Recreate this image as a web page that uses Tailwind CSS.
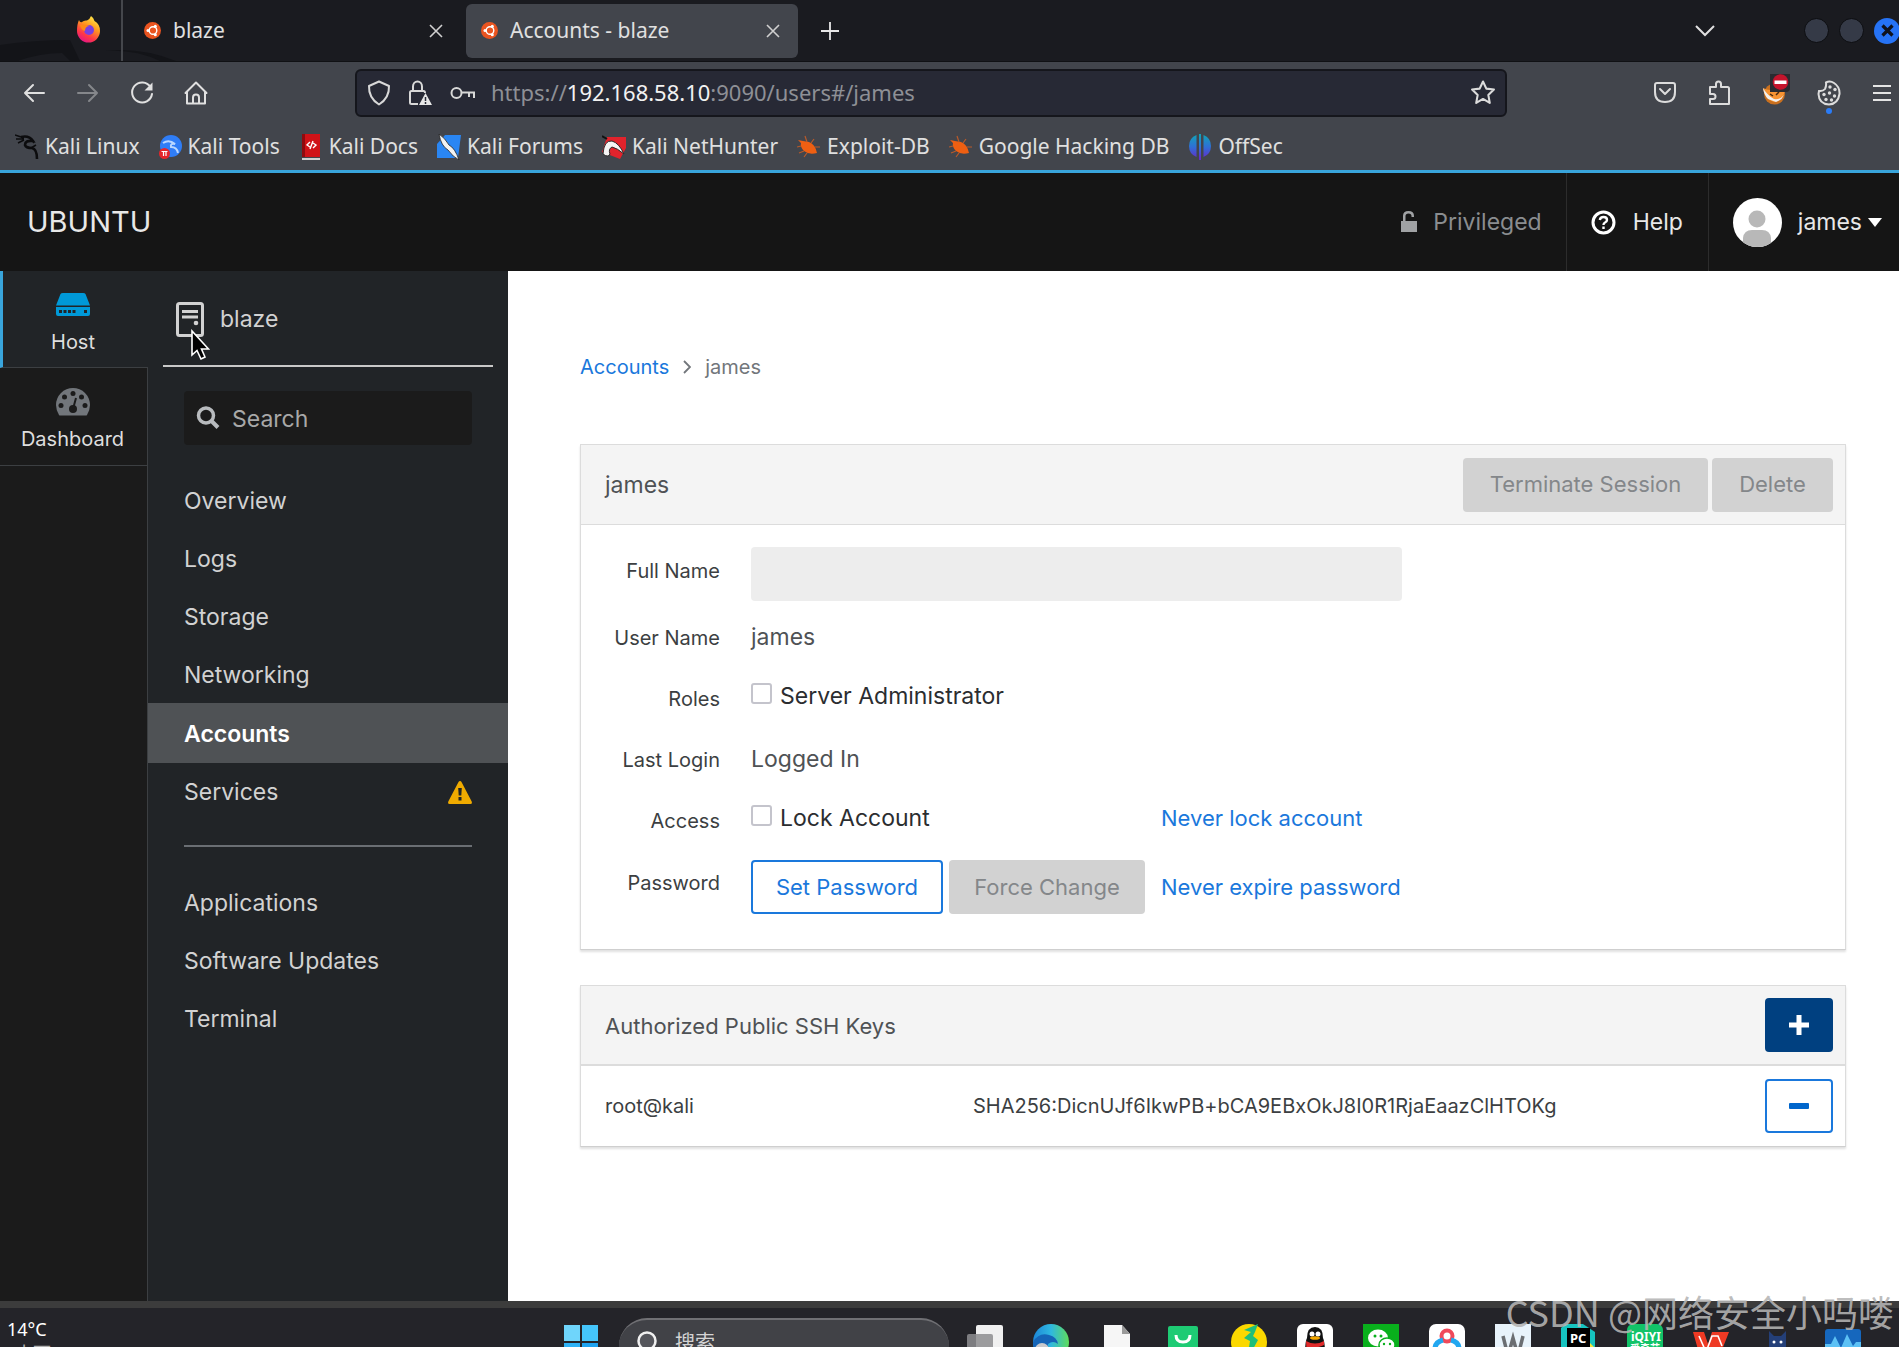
<!DOCTYPE html>
<html lang="en">
<head>
   <meta charset="UTF-8">
   <meta name="viewport" content="width=device-width, initial-scale=1.0">
   <title>Accounts - blaze</title>
   <script src="https://cdn.jsdelivr.net/npm/@tailwindcss/browser@4"></script>
   <style>
       body {
           font-family: 'Inter', 'Noto Sans CJK SC', sans-serif;
       }
       .chrome {
           font-family: 'Noto Sans', 'Noto Sans CJK SC', sans-serif;
       }
   </style>
</head>
<body class="h-screen flex flex-col overflow-hidden bg-[#151515] text-[23px]">

   <!-- Browser window -->
   <div class="chrome shrink-0 text-[21px] text-[#e0e0e0]">
       <!-- Tab strip -->
       <div class="h-[62px] bg-[#1a1b20] border-b border-[#101114] flex items-center relative">
           <svg class="absolute left-0 bottom-0 w-[180px] h-[22px]" viewBox="0 0 180 22">
               <path d="M0 6Q34 1 70 1L80 22H70L62 14Q40 14 18 22H0Z" fill="#131418"/>
               <path d="M106 12Q140 8 176 22H160Q135 10 106 12Z" fill="#131418"/>
           </svg>
           <div class="w-[123px] h-full shrink-0 border-r-2 border-[#45474c] flex items-center justify-end pr-[20px] relative">
               <svg class="w-[25px] h-[29px]" viewBox="0 0 25 29">
                   <defs>
                       <linearGradient id="ff" x1="0.8" y1="0" x2="0.3" y2="1"><stop offset="0" stop-color="#fff44f"/><stop offset=".4" stop-color="#ff9a1f"/><stop offset=".75" stop-color="#ff3647"/><stop offset="1" stop-color="#e31587"/></linearGradient>
                   </defs>
                   <path d="M15 0Q18 2 18.500 5Q24 8 24 15A11.500 11.500 0 0 1 1 15Q1 8 3 4Q4 7 6 6Q8 4 11 4.500Q14 3 15 0Z" fill="url(#ff)"/>
                   <circle cx="13" cy="14" r="5" fill="#7a3fe0"/>
                   <path d="M4 9Q9 8 14 10Q9 10 9 15Q5 14 4 9Z" fill="#ff8a16"/>
               </svg>
           </div>
           <button class="h-full w-[343px] shrink-0 flex items-center pl-[21px] pr-[22px] gap-[12px] relative">
               <svg class="w-[17px] h-[17px]" viewBox="0 0 17 17"><circle cx="8.500" cy="8.500" r="8.500" fill="#e95420"/><circle cx="9" cy="8.500" r="3.800" fill="none" stroke="#fff" stroke-width="1.400"/><circle cx="4" cy="8.500" r="1.500" fill="#fff"/><circle cx="11.300" cy="4.300" r="1.500" fill="#fff"/><circle cx="11.300" cy="12.700" r="1.500" fill="#fff"/></svg>
               <span>blaze</span>
               <svg class="ml-auto w-[16px] h-[16px]" viewBox="0 0 16 16" stroke="#d0d0d0" stroke-width="1.600"><path d="M2 2L14 14M14 2L2 14"/></svg>
           </button>
           <button class="h-[54px] w-[332px] shrink-0 rounded-md bg-[#42454c] flex items-center pl-[15px] pr-[17px] gap-[12px]">
               <svg class="w-[17px] h-[17px]" viewBox="0 0 17 17"><circle cx="8.500" cy="8.500" r="8.500" fill="#e95420"/><circle cx="9" cy="8.500" r="3.800" fill="none" stroke="#fff" stroke-width="1.400"/><circle cx="4" cy="8.500" r="1.500" fill="#fff"/><circle cx="11.300" cy="4.300" r="1.500" fill="#fff"/><circle cx="11.300" cy="12.700" r="1.500" fill="#fff"/></svg>
               <span>Accounts - blaze</span>
               <svg class="ml-auto w-[16px] h-[16px]" viewBox="0 0 16 16" stroke="#d0d0d0" stroke-width="1.600"><path d="M2 2L14 14M14 2L2 14"/></svg>
           </button>
           <button class="ml-[22px]" aria-label="New tab">
               <svg class="w-[20px] h-[20px]" viewBox="0 0 20 20" stroke="#e8e8e8" stroke-width="1.800"><path d="M10 1V19M1 10H19"/></svg>
           </button>
           <div class="ml-auto flex items-center">
               <button class="mr-[89px]" aria-label="List all tabs">
                   <svg class="w-[20px] h-[14px]" viewBox="0 0 20 14" fill="none" stroke="#e0e0e0" stroke-width="2"><path d="M1 2L10 11L19 2"/></svg>
               </button>
               <div class="flex gap-[10px] -mr-[1px]">
                   <button class="w-[25px] h-[25px] rounded-full bg-[#353a47] border border-[#0c0d10]" aria-label="Minimize"></button>
                   <button class="w-[25px] h-[25px] rounded-full bg-[#353a47] border border-[#0c0d10]" aria-label="Maximize"></button>
                   <button class="w-[26px] h-[26px] rounded-full bg-[#2673f5] flex items-center justify-center" aria-label="Close">
                       <svg class="w-[13px] h-[13px]" viewBox="0 0 13 13" stroke="#10131c" stroke-width="3.200"><path d="M1.500 1.500L11.500 11.500M11.500 1.500L1.500 11.500"/></svg>
                   </button>
               </div>
           </div>
       </div>

       <!-- Navigation toolbar -->
       <div class="h-[61px] bg-[#42454c] flex items-center pl-[22px] pr-[7px]">
           <div class="flex gap-[30px] w-[333px] shrink-0">
               <button aria-label="Back"><svg class="w-[24px] h-[24px]" viewBox="0 0 24 24" fill="none" stroke="#e0e0e0" stroke-width="2" stroke-linecap="round" stroke-linejoin="round"><path d="M22 12H3M11 4L3 12L11 20"/></svg></button>
               <button aria-label="Forward"><svg class="w-[24px] h-[24px]" viewBox="0 0 24 24" fill="none" stroke="#85878b" stroke-width="2" stroke-linecap="round" stroke-linejoin="round"><path d="M2 12H21M13 4L21 12L13 20"/></svg></button>
               <button aria-label="Reload"><svg class="w-[24px] h-[24px]" viewBox="0 0 24 24" fill="none" stroke="#e0e0e0" stroke-width="2" stroke-linecap="round"><path d="M20.500 6A10 10 0 1 0 22 13"/><path d="M22.500 1.500V9.500H14.500Z" fill="#e0e0e0" stroke="none"/></svg></button>
               <button aria-label="Home"><svg class="w-[24px] h-[24px]" viewBox="0 0 24 24" fill="none" stroke="#e0e0e0" stroke-width="2" stroke-linejoin="round" stroke-linecap="round"><path d="M1.500 12L12 1.500L22.500 12M3 11V22.500H21V11M9 22V16.500Q9 13.500 12 13.500Q15 13.500 15 16.500V22"/></svg></button>
           </div>
           <div class="h-[48px] flex-1 max-w-[1152px] rounded-md bg-[#272935] border-2 border-[#15161c] flex items-center pl-[10px] pr-[9px]">
               <svg class="w-[24px] h-[26px]" viewBox="0 0 24 26" fill="none" stroke="#d8d8d8" stroke-width="2" stroke-linejoin="round"><path d="M12 1.500L22 6Q22.500 18 12 24.500Q1.500 18 2 6Z"/></svg>
               <svg class="ml-[17px] w-[24px] h-[26px]" viewBox="0 0 24 26" fill="none" stroke="#d8d8d8" stroke-width="2"><path d="M10 24H3.500Q2 24 2 22.500V12.500Q2 11 3.500 11H15.500Q17 11 17 13M5 11V6.500A4.500 5 0 0 1 14 6.500V11"/><path d="M17.500 13L24 25H11Z" fill="#e8e8e8" stroke="none"/><path d="M17.500 17V21M17.500 22V24" stroke="#272935" stroke-width="1.500"/></svg>
               <svg class="ml-[18px] w-[26px] h-[16px]" viewBox="0 0 26 16" fill="none" stroke="#d8d8d8" stroke-width="2"><circle cx="6.500" cy="8" r="5"/><path d="M11.500 7.500H25M24 7.500V13M19 7.500V12"/></svg>
               <div class="ml-[15px] text-[22px] text-[#8e9096]">https://<span class="text-[#f2f2f2]">192.168.58.10</span>:9090/users#/james</div>
               <svg class="ml-auto w-[26px] h-[25px]" viewBox="0 0 24 24" fill="none" stroke="#dcdcdc" stroke-width="2" stroke-linejoin="round"><path d="M12 1.500L15.200 8.300L22.500 9.200L17.100 14.300L18.500 22L12 18.200L5.500 22L6.900 14.300L1.500 9.200L8.800 8.300Z"/></svg>
           </div>
           <div class="ml-auto flex items-center gap-[31px]">
               <svg class="w-[22px] h-[24px]" viewBox="0 0 22 24" fill="none" stroke="#dcdcdc" stroke-width="2" stroke-linejoin="round" stroke-linecap="round"><path d="M3 2H19Q21 2 21 4V11Q21 21 11 21Q1 21 1 11V4Q1 2 3 2Z"/><path d="M6 8L11 13L16 8"/></svg>
               <svg class="w-[24px] h-[26px]" viewBox="0 0 24 26" fill="none" stroke="#dcdcdc" stroke-width="2" stroke-linejoin="round"><path d="M3 7H9V4Q9 1.500 11.500 1.500Q14 1.500 14 4V7H20.500Q22 7 22 8.500V24H3V19H6Q8.500 19 8.500 16.500Q8.500 14 6 14H3Z"/></svg>
               <span class="relative">
                   <svg class="w-[24px] h-[26px]" viewBox="0 0 24 26"><circle cx="12.500" cy="14" r="10.500" fill="#c9701f"/><path d="M1 8Q5 10 8 10L17 9L23 7Q24 18 12 22Q2 19 1 8Z" fill="#f79433"/><path d="M1 8Q2 15 6 19L14 22Q20 20 22 15Q18 20 12 19Q5 15 1 8Z" fill="#f2f0ee"/><path d="M8 14L11 16M17 12L14 15" stroke="#4b2a10" stroke-width="1.500"/></svg>
                   <svg class="absolute -top-[7px] left-[8px] w-[20px] h-[19px]" viewBox="0 0 20 19"><path d="M0 1H20V15Q20 19 16 19H0Z" fill="#2a2b30"/><circle cx="10.500" cy="9" r="7.800" fill="#c4142c"/><path d="M4.500 7.500H16.500V11H4.500Z" fill="#fff"/></svg>
               </span>
               <span class="relative">
                   <svg class="w-[24px] h-[26px]" viewBox="0 0 24 26" fill="none" stroke="#dcdcdc" stroke-width="2"><path d="M9 2.500Q13 .5 17 3Q23 7 22.500 14Q21 24 12 24.500Q2 24 1.500 14L2 11Q6 11.500 8 9Q9.500 6 9 2.500Z"/><g fill="#dcdcdc" stroke="none"><circle cx="13" cy="7" r="1.700"/><circle cx="18" cy="9.500" r="1.700"/><circle cx="12.500" cy="13" r="1.700"/><circle cx="7" cy="14.500" r="1.700"/><circle cx="17.500" cy="16" r="1.700"/><circle cx="9" cy="19.500" r="1.700"/><circle cx="14.500" cy="20" r="1.700"/></g></svg>
                   <span class="absolute left-[9px] -bottom-[8px] w-[6px] h-[6px] rounded-full bg-[#2b7cf6]"></span>
               </span>
               <svg class="w-[20px] h-[18px]" viewBox="0 0 20 18" stroke="#e4e4e4" stroke-width="2"><path d="M1 2H19M1 9H19M1 16H19"/></svg>
           </div>
       </div>

       <!-- Bookmarks -->
       <nav class="h-[47px] bg-[#42454c] flex items-center pl-[15px] gap-[19px] whitespace-nowrap">
           <a href="#" class="flex items-center gap-[6px]">
               <svg class="w-[24px] h-[26px]" viewBox="0 0 24 26" fill="none" stroke="#0c0c0e"><path d="M0 1L9 4M1 5L9 5M3 9L9 6" stroke-width="1.500"/><path d="M6 3Q14 1 18 7Q10 6 10 11Q11 14 17 14Q22 15 22 25" stroke-width="2.600"/><path d="M16 5L19 9M16 14L21 11" stroke-width="1.500"/></svg>
               Kali Linux</a>
           <a href="#" class="flex items-center gap-[6px]">
               <svg class="w-[23px] h-[26px]" viewBox="0 0 23 26"><circle cx="12" cy="12" r="11" fill="#2f7df6"/><path d="M4 9Q10 5 16 10Q11 9 12 13Q18 13 19 19" fill="none" stroke="#b9d7ff" stroke-width="2"/><circle cx="5.500" cy="19.500" r="5.500" fill="#e5252a"/><path d="M2.500 17.500H8.500M4.500 17.500V22M7 17.500V22" stroke="#fff" stroke-width="1.200"/></svg>
               Kali Tools</a>
           <a href="#" class="flex items-center gap-[6px]">
               <svg class="w-[24px] h-[26px]" viewBox="0 0 24 26"><path d="M3 0H21V23H3Z" fill="#d01217"/><path d="M3 0H6V23H3Z" fill="#8f0a0e"/><path d="M3 24H21V26H3Z" fill="#cfcfcf"/><path d="M11 8L8 11L11 13M14 9L17 11L14 14M14 7L11 15" stroke="#fff" stroke-width="1.400" fill="none"/></svg>
               Kali Docs</a>
           <a href="#" class="flex items-center gap-[6px]">
               <svg class="w-[24px] h-[26px]" viewBox="0 0 24 26"><path d="M8 1H24L21 24H0V10Z" fill="#2a86f3"/><path d="M2 0Q8 4 12 11Q18 14 22 26Q16 23 11 16Q4 12 2 0Z" fill="#f2f2f2" stroke="#222" stroke-width=".8"/></svg>
               Kali Forums</a>
           <a href="#" class="flex items-center gap-[6px]">
               <svg class="w-[24px] h-[26px]" viewBox="0 0 24 26"><path d="M5 3H24V14L18 25L0 18Z" fill="#e2232c"/><path d="M1 20Q2 6 10 7Q17 9 22 20Q15 14 10 13Q6 15 8 20Q6 24 1 20Z" fill="#f5f5f5" stroke="#2a2a2a" stroke-width="1"/><path d="M0 2L5 5" stroke="#111" stroke-width="2"/></svg>
               Kali NetHunter</a>
           <a href="#" class="flex items-center gap-[6px]">
               <svg class="w-[24px] h-[26px]" viewBox="0 0 24 26"><path d="M1 6L6 7L12 8Q18 10 20 19Q12 21 7 17Q3 13 4 9Z" fill="#ee5f12"/><path d="M10 8L8 2M14 9L17 5M18 13L23 13M7 17L2 19M10 19L7 23M4 12L0 13" stroke="#b85a2a" stroke-width="1.200"/></svg>
               Exploit-DB</a>
           <a href="#" class="flex items-center gap-[6px]">
               <svg class="w-[24px] h-[26px]" viewBox="0 0 24 26"><path d="M1 6L6 7L12 8Q18 10 20 19Q12 21 7 17Q3 13 4 9Z" fill="#ee5f12"/><path d="M10 8L8 2M14 9L17 5M18 13L23 13M7 17L2 19M10 19L7 23M4 12L0 13" stroke="#b85a2a" stroke-width="1.200"/></svg>
               Google Hacking DB</a>
           <a href="#" class="flex items-center gap-[6px]">
               <svg class="w-[24px] h-[26px]" viewBox="0 0 24 26"><defs><linearGradient id="os" x1="0" y1="0" x2="0" y2="1"><stop offset="0" stop-color="#10a5b5"/><stop offset=".5" stop-color="#2f6fd6"/><stop offset="1" stop-color="#6a24c8"/></linearGradient></defs><path d="M8.500 1V23Q1 20 1 12Q1 4 8.500 1ZM15.500 1V23Q23 20 23 12Q23 4 15.500 1ZM11 0H13V26H11Z" fill="url(#os)"/></svg>
               OffSec</a>
       </nav>
   </div>

   <!-- Cockpit masthead -->
   <header class="shrink-0 h-[101px] bg-[#151515] border-t-[3px] border-[#39a5dc] flex items-center pl-[27px] text-[#e8e8e8]">
       <div class="text-[29px]">UBUNTU</div>
       <div class="ml-auto flex h-full items-center">
           <div class="flex items-center gap-[15px] pr-[24px] text-[#8a8d90]">
               <svg class="w-[18px] h-[24px]" viewBox="0 0 18 24"><path d="M1 11H3V6Q3 1 8.500 1Q14 1 14 6V7H11.500V6Q11.500 3.500 8.500 3.500Q5.500 3.500 5.500 6V11H17V22H1Z" fill="#a0a2a4"/></svg>
               Privileged
           </div>
           <a href="#" class="h-full border-l border-[#2c2c2c] flex items-center gap-[17px] pl-[24px] pr-[25px]">
               <svg class="w-[25px] h-[25px]" viewBox="0 0 25 25" fill="none" stroke="#fff" stroke-width="3"><circle cx="12.500" cy="12.500" r="10.500"/><path d="M8.800 10Q9.300 7 12.500 7Q16 7 16 10Q16 11.500 14 12.500Q12.500 13.200 12.500 15M12.500 16.500V19" stroke-width="2.400"/></svg>
               Help
           </a>
           <button class="h-full border-l border-[#2c2c2c] flex items-center pl-[24px] pr-[17px]">
               <svg class="w-[49px] h-[49px]" viewBox="0 0 49 49"><defs><clipPath id="av"><circle cx="24.500" cy="24.500" r="24.500"/></clipPath></defs><g clip-path="url(#av)"><path d="M0 0H49V49H0Z" fill="#fff"/><circle cx="24" cy="21" r="8.500" fill="#b8b8b8"/><path d="M10 49V40Q11 32 19 32H29Q37 32 38 40V49Z" fill="#b8b8b8"/></g></svg>
               <span class="ml-[16px]">james</span>
               <svg class="ml-[6px] w-[14px] h-[9px]" viewBox="0 0 14 9"><path d="M0 0H14L7 9Z" fill="#fff"/></svg>
           </button>
       </div>
   </header>

   <main class="flex-1 min-h-0 flex">
       <!-- Host switcher -->
       <nav class="w-[148px] shrink-0 bg-[#1b1b1b] text-[#dedede] text-[20px] border-r border-[#3c3f42]">
           <a href="#" class="h-[97px] -mr-[1px] bg-[#212427] border-l-[3px] border-l-[#39a5dc] border-b border-b-[#3c3f42] flex flex-col items-center pt-[22px] pr-[5px] relative">
               <svg class="w-[34px] h-[23px]" viewBox="0 0 34 23"><path d="M7 0H27Q29 0 29.500 1L34 12.500H0L4.500 1Q5 0 7 0ZM0 14H34V21Q34 23 32 23H2Q0 23 0 21Z" fill="#0099d8"/><path d="M3 17H6V20H3ZM7.500 17H10.500V20H7.500ZM12 17H15V20H12ZM16.500 17H19.500V20H16.500ZM28 17H31V20H28Z" fill="#212427"/></svg>
               <span class="mt-[12px] leading-[28px]">Host</span>
           </a>
           <a href="#" class="h-[98px] border-b border-[#3c3f42] flex flex-col items-center pt-[20px] pr-[2px]">
               <svg class="w-[34px] h-[28px]" viewBox="0 0 34 28"><path d="M3 27Q0 22 0 17A17 17 0 0 1 34 17Q34 22 31 27Q30.500 27.500 30 27.500H4Q3.500 27.500 3 27Z" fill="#72767b"/><g fill="#1b1b1b"><circle cx="17" cy="5.500" r="2.500"/><circle cx="8.500" cy="9" r="2.500"/><circle cx="25.500" cy="9" r="2.500"/><circle cx="5" cy="17.500" r="2.500"/><circle cx="29" cy="17.500" r="2.500"/><circle cx="17" cy="21" r="4"/></g><path d="M17 21L20 10" stroke="#1b1b1b" stroke-width="2"/></svg>
               <span class="mt-[9px] leading-[28px]">Dashboard</span>
           </a>
       </nav>

       <!-- Sidebar -->
       <aside class="w-[360px] shrink-0 bg-[#212427] text-[#d2d2d2] flex flex-col">
           <div class="h-[96px] mx-[15px] border-b-2 border-[#c8c8c8] flex items-center pl-[13px] pt-[3px] relative">
               <svg class="w-[28px] h-[36px]" viewBox="0 0 28 36" fill="none" stroke="#d2d2d2" stroke-width="3"><rect x="1.500" y="1.500" width="25" height="32" rx="2"/><path d="M6 9.500H22M6 15H22" stroke-width="2.800"/><circle cx="20" cy="21" r="2.300" fill="#d2d2d2" stroke="none"/></svg>
               <span class="ml-[16px]">blaze</span>
               <!-- mouse pointer -->
               <svg class="absolute left-[27px] top-[58px] w-[20px] h-[32px]" viewBox="0 0 20 32"><path d="M2 2V26L7 21.500L11 30L15 28L11.500 20H18.500Z" fill="#000" stroke="#fff" stroke-width="1.600"/></svg>
           </div>
           <label class="mt-[24px] mx-[36px] h-[54px] rounded bg-[#1b1b1b] flex items-center pl-[12px]">
               <svg class="w-[24px] h-[24px] shrink-0" viewBox="0 0 24 24" fill="none" stroke="#b8bbbe" stroke-width="3.500"><circle cx="10" cy="9.500" r="7.500"/><path d="M15.500 15L22 21.500" stroke-width="4"/></svg>
               <input type="text" placeholder="Search" aria-label="Search" class="ml-[12px] pt-[2px] w-full bg-transparent outline-none placeholder:text-[#a8a8a8]">
           </label>
           <nav class="mt-[26px]">
               <a href="#" class="h-[58px] px-[36px] pt-[2px] flex items-center">Overview</a>
               <a href="#" class="h-[58px] px-[36px] pt-[2px] flex items-center">Logs</a>
               <a href="#" class="h-[58px] px-[36px] pt-[2px] flex items-center">Storage</a>
               <a href="#" class="h-[58px] px-[36px] pt-[2px] flex items-center">Networking</a>
               <a href="#" class="h-[60px] px-[36px] pt-[2px] flex items-center bg-[#4f5255] text-white font-semibold">Accounts</a>
               <a href="#" class="h-[58px] px-[36px] flex items-center justify-between">Services
                   <svg class="w-[24px] h-[23px]" viewBox="0 0 24 23"><path d="M12 0Q13 0 13.500 1L23.700 20.500Q24.500 23 22.500 23H1.500Q-.5 23 .3 20.500L10.500 1Q11 0 12 0Z" fill="#f0ab00"/><path d="M10.200 7H13.800L13.300 14.500H10.700ZM10.500 16H13.500V19.500H10.500Z" fill="#212427"/></svg>
               </a>
               <hr class="mx-[36px] mt-[24px] mb-[26px] border-t-2 border-[#6a6e73]">
               <a href="#" class="h-[58px] px-[36px] pt-[2px] flex items-center">Applications</a>
               <a href="#" class="h-[58px] px-[36px] pt-[2px] flex items-center">Software Updates</a>
               <a href="#" class="h-[58px] px-[36px] pt-[2px] flex items-center">Terminal</a>
           </nav>
       </aside>

       <!-- Account page -->
       <section class="flex-1 bg-white pl-[72px] pr-[53px] pt-[82px] text-[#3c3f42]">
           <nav class="h-[28px] flex items-center text-[20px] text-[#72767b]">
               <a href="#" class="text-[#1a78dc]">Accounts</a>
               <svg class="mx-[14px] w-[8px] h-[14px]" viewBox="0 0 8 14" fill="none" stroke="#72767b" stroke-width="1.800"><path d="M1 1L7 7L1 13"/></svg>
               <span>james</span>
           </nav>

           <form class="mt-[63px] border border-[#dcdcdc] border-b-[#cfcfcf] shadow-[0_2px_2px_#0000001f]">
               <div class="h-[80px] bg-[#f4f4f4] border-b border-[#dcdcdc] flex items-center pl-[24px] pr-[12px]">
                   <h2 class="pt-[2px] text-[#4f5255]">james</h2>
                   <button type="button" disabled class="ml-auto h-[54px] w-[245px] rounded bg-[#d2d2d2] text-[22px] text-[#84878a]">Terminate Session</button>
                   <button type="button" disabled class="ml-[4px] h-[54px] w-[121px] rounded bg-[#d2d2d2] text-[22px] text-[#84878a]">Delete</button>
               </div>
               <div class="pt-[22px] pb-[35px]">
                   <div class="flex items-center">
                       <label for="fullName" class="w-[139px] shrink-0 mr-[31px] pb-[6px] text-right text-[20px]">Full Name</label>
                       <input id="fullName" type="text" disabled class="h-[54px] w-full max-w-[651px] rounded bg-[#ededed]">
                   </div>
                   <div class="mt-[6px] h-[61px] flex items-center">
                       <span class="w-[139px] shrink-0 mr-[31px] text-right text-[20px]">User Name</span>
                       <span class="text-[#4f5255]">james</span>
                   </div>
                   <div class="h-[61px] flex items-center">
                       <span class="w-[139px] shrink-0 mr-[31px] text-right text-[20px]">Roles</span>
                       <label class="flex items-center gap-[8px] pb-[5px] text-[#2b2d30]"><input type="checkbox" class="appearance-none w-[21px] h-[21px] mb-[6px] rounded-[3px] border-2 border-[#c4c4cc] bg-white">Server Administrator</label>
                   </div>
                   <div class="h-[61px] flex items-center">
                       <span class="w-[139px] shrink-0 mr-[31px] text-right text-[20px]">Last Login</span>
                       <span class="text-[#4f5255]">Logged In</span>
                   </div>
                   <div class="h-[61px] flex items-center">
                       <span class="w-[139px] shrink-0 mr-[31px] text-right text-[20px]">Access</span>
                       <label class="w-[394px] shrink-0 mr-[16px] flex items-center gap-[8px] pb-[5px] text-[#2b2d30]"><input type="checkbox" class="appearance-none w-[21px] h-[21px] mb-[6px] rounded-[3px] border-2 border-[#c4c4cc] bg-white">Lock Account</label>
                       <a href="#" class="pb-[5px] text-[22px] text-[#1a78dc]">Never lock account</a>
                   </div>
                   <div class="mt-[9px] flex items-center">
                       <span class="w-[139px] shrink-0 mr-[31px] pb-[8px] text-right text-[20px]">Password</span>
                       <div class="w-[394px] shrink-0 mr-[16px] flex gap-[6px] text-[22px]">
                           <button type="button" class="h-[54px] w-[192px] rounded border-2 border-[#1a78dc] text-[#1a78dc]">Set Password</button>
                           <button type="button" disabled class="h-[54px] w-[196px] rounded bg-[#d2d2d2] text-[#84878a]">Force Change</button>
                       </div>
                       <a href="#" class="text-[22px] text-[#1a78dc]">Never expire password</a>
                   </div>
               </div>
           </form>

           <div class="mt-[35px] border border-[#dcdcdc] border-b-[#cfcfcf] shadow-[0_2px_2px_#0000001f]">
               <div class="h-[80px] bg-[#f4f4f4] border-b-2 border-[#dcdcdc] flex items-center pl-[24px] pr-[12px]">
                   <h2 class="pt-[2px] text-[22px] text-[#4f5255]">Authorized Public SSH Keys</h2>
                   <button class="ml-auto w-[68px] h-[54px] rounded bg-[#004080] flex items-center justify-center" aria-label="Add key">
                       <svg class="w-[20px] h-[20px]" viewBox="0 0 20 20"><path d="M7.500 0H12.500V7.500H20V12.500H12.500V20H7.500V12.500H0V7.500H7.500Z" fill="#fff"/></svg>
                   </button>
               </div>
               <table class="w-full text-[20px]">
                   <tr class="h-[80px]">
                       <td class="w-[392px] pl-[24px]">root@kali</td>
                       <td>SHA256:DicnUJf6IkwPB+bCA9EBxOkJ8I0R1RjaEaazClHTOKg</td>
                       <td class="w-[80px] pr-[12px]">
                           <button class="w-[68px] h-[54px] rounded border-2 border-[#1a78dc] flex items-center justify-center" aria-label="Remove key">
                               <svg class="w-[20px] h-[6px]" viewBox="0 0 20 6"><rect width="20" height="6" rx="1" fill="#0066cc"/></svg>
                           </button>
                       </td>
                   </tr>
               </table>
           </div>
       </section>
   </main>

   <!-- Desktop taskbar -->
   <footer class="chrome shrink-0 h-[46px] bg-[#242429] border-t-[7px] border-[#3c3c3c] flex items-start overflow-hidden relative text-white">
       <div class="w-[564px] shrink-0 pl-[7px] pt-[9px] text-[18px] leading-[24px]">14°C<div class="pl-[8px] text-[#b0b0b0]">小雨</div></div>
       <div class="w-[34px] h-[34px] mt-[17px] shrink-0 grid grid-cols-2 gap-[2px]">
           <span class="bg-[#6fd5fb]"></span><span class="bg-[#45c6fb]"></span><span class="bg-[#2fb2f6]"></span><span class="bg-[#1da2f0]"></span>
       </div>
       <div class="ml-[21px] mt-[10px] w-[330px] h-[56px] shrink-0 rounded-full bg-[#414247] border-t-2 border-[#707074] flex items-start pl-[17px] pt-[10px]">
           <svg class="w-[22px] h-[26px]" viewBox="0 0 22 26" fill="#55565c" stroke="#f0f0f0" stroke-width="2.500"><circle cx="11" cy="11" r="8.500"/><path d="M5 17L1 23"/></svg>
           <span class="ml-[17px] text-[20px] leading-[26px] text-[#d4d4d4]">搜索</span>
       </div>
       <div class="ml-[18px] mt-[16px] flex gap-[30px]">
           <svg class="w-[36px] h-[36px]" viewBox="0 0 36 36"><rect x="9" y="1" width="27" height="30" rx="2" fill="#f0f0f0"/><rect x="0" y="10" width="26" height="26" rx="2" fill="#8d8d8f" opacity=".85"/></svg>
           <svg class="w-[36px] h-[36px]" viewBox="0 0 36 36"><defs><linearGradient id="eg" x1="0" y1="0" x2="1" y2="0"><stop offset="0" stop-color="#1c86d8"/><stop offset=".5" stop-color="#2fb8e0"/><stop offset="1" stop-color="#5fdc5a"/></linearGradient></defs><circle cx="18" cy="18" r="18" fill="url(#eg)"/><path d="M0 18Q6 8 16 11Q24 13 25 20Q20 16 15 20L13 36Q0 32 0 18Z" fill="#1565b8"/><circle cx="9" cy="26" r="7" fill="#c9c9cc"/></svg>
           <svg class="w-[36px] h-[36px]" viewBox="0 0 36 36"><path d="M5 1H23L31 10V36H5Z" fill="#f6f6f6"/><path d="M23 1V10H31Z" fill="#9a9a9a"/></svg>
           <svg class="w-[36px] h-[36px]" viewBox="0 0 36 36"><path d="M5 2H31Q33 2 33 4V36H3V4Q3 2 5 2Z" fill="#1ecb74"/><path d="M11 11Q11 18 18 18Q25 18 25 11" fill="none" stroke="#fff" stroke-width="3"/></svg>
           <svg class="w-[36px] h-[36px]" viewBox="0 0 36 36"><circle cx="18" cy="18" r="18" fill="#fbd800"/><path d="M13 6L27 0L24 8L22 12L27 16L16 36L19 17L13 14L20 8Z" fill="#1fbf7a"/></svg>
           <svg class="w-[36px] h-[36px]" viewBox="0 0 36 36"><rect width="36" height="40" rx="6" fill="#fff"/><path d="M8 30Q8 18 10 14Q10 3 18 3Q26 3 26 14Q28 18 28 30Z" fill="#111"/><circle cx="15" cy="10" r="2.500" fill="#fff"/><circle cx="21" cy="10" r="2.500" fill="#fff"/><ellipse cx="18" cy="14" rx="5" ry="1.800" fill="#f4a800"/><path d="M9 17Q18 22 27 17V21Q18 25 13 23V36H10Z" fill="#e02a2a"/></svg>
           <svg class="w-[36px] h-[36px]" viewBox="0 0 36 36"><path d="M0 0H36V36H0Z" fill="#09b01c"/><ellipse cx="15" cy="14" rx="10" ry="8.500" fill="#fff"/><ellipse cx="24" cy="21" rx="8" ry="7" fill="#fff" stroke="#09b01c" stroke-width="1.500"/><g fill="#09b01c"><circle cx="12" cy="12" r="1.500"/><circle cx="18" cy="12" r="1.500"/><circle cx="21" cy="20" r="1.200"/><circle cx="27" cy="20" r="1.200"/></g></svg>
           <svg class="w-[36px] h-[36px]" viewBox="0 0 36 36"><rect width="36" height="40" rx="7" fill="#fff"/><circle cx="18" cy="12" r="5.500" fill="none" stroke="#f0495a" stroke-width="4"/><path d="M14 16Q6 18 6 25M22 16Q30 18 30 25" stroke="#22a7f0" stroke-width="5" fill="none"/></svg>
           <svg class="w-[36px] h-[36px]" viewBox="0 0 36 36"><path d="M0 0H36V36H0Z" fill="#e8f3fb"/><path d="M8 12L13 32L18 14L23 32L28 12" fill="none" stroke="#6b6e72" stroke-width="3.500"/></svg>
           <svg class="w-[36px] h-[36px]" viewBox="0 0 36 36"><path d="M4 0H22L34 8V24L30 36H0V4Z" fill="#16c4c0"/><path d="M28 18L36 26V36H24Z" fill="#f5e83c"/><path d="M6 4H29V36H6Z" fill="#000"/><text x="9" y="19" font-size="13" font-weight="bold" fill="#fff">PC</text></svg>
           <svg class="w-[36px] h-[36px]" viewBox="0 0 36 36"><rect width="36" height="42" rx="6" fill="#12c368"/><text x="4" y="17" font-size="12" font-weight="bold" fill="#fff">iQIYI</text><text x="3" y="28" font-size="10" font-weight="bold" fill="#fff">爱奇艺</text></svg>
           <svg class="w-[36px] h-[36px]" viewBox="0 0 36 36"><path d="M0 8H11L15 20L19 8H36L25 36H18L17 30L14 36H8Z" fill="#ee3a24"/><path d="M6 12L13 28L19 12H25L29 22" fill="none" stroke="#fff" stroke-width="1.600"/></svg>
           <svg class="w-[36px] h-[36px]" viewBox="0 0 36 36"><path d="M10 7L15 12H22L27 7V22Q27 27 24 28V36H13V28Q10 27 10 22Z" fill="#243f78"/><circle cx="15" cy="18" r="1.500" fill="#fff"/><circle cx="22" cy="18" r="1.500" fill="#fff"/></svg>
           <svg class="w-[36px] h-[36px]" viewBox="0 0 36 36"><rect y="5" width="36" height="36" rx="3" fill="#1667bd"/><path d="M0 20H6L10 12L16 24L22 10L28 22L31 18H36V36H0Z" fill="#5cc1f5"/></svg>
       </div>
   </footer>

   <div class="absolute right-[5px] bottom-[12px] text-[36px] leading-[48px] text-[#b4b4b4]/90 whitespace-nowrap" style="font-family: 'Noto Sans CJK SC', sans-serif">CSDN @网络安全小吗喽</div>
</body>
</html>
